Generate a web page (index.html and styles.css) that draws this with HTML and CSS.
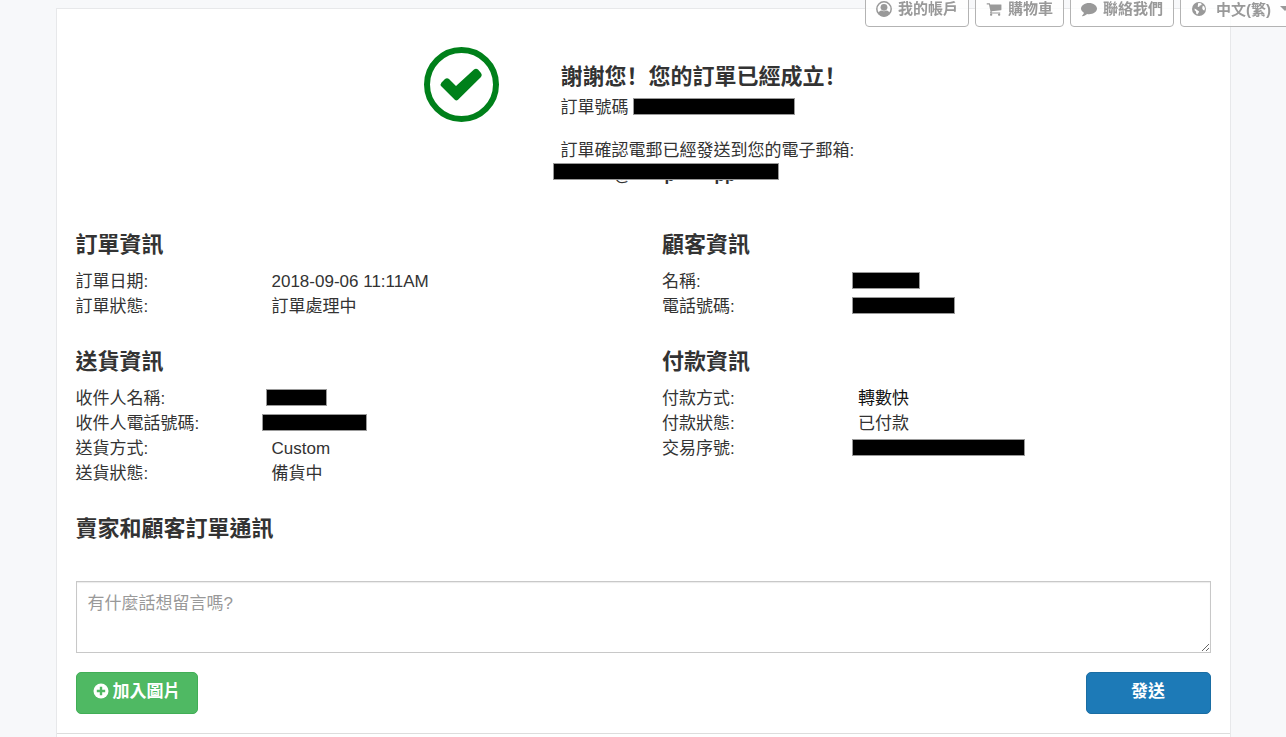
FILE: index.html
```html
<!DOCTYPE html>
<html lang="zh-Hant">
<head>
    <meta charset="UTF-8">
    <meta name="viewport" content="width=device-width, initial-scale=1.0">
    <title>訂單已經成立</title>
    <link rel="stylesheet" href="styles.css">
</head>
<body>
    <nav class="topnav">
        <a class="nav-btn" href="#">
            <svg class="icon" viewBox="0 0 16 16"><circle cx="8" cy="8" r="7.2" fill="none" stroke="currentColor" stroke-width="1.500"/><circle cx="8" cy="6.300" r="3.400" fill="currentColor"/><path fill="currentColor" d="M2 12.400C2.600 10.800 4 9.900 5.400 9.600q2.600 1.500 5.200 0c1.400.300 2.800 1.200 3.400 2.800Q11.500 15.500 8 15.500t-6-3.100z"/></svg>
            我的帳戶
        </a>
        <a class="nav-btn" href="#">
            <svg class="icon" viewBox="0 0 1792 1792"><path fill="currentColor" d="M704 1536q0 52-38 90t-90 38-90-38-38-90 38-90 90-38 90 38 38 90zm896 0q0 52-38 90t-90 38-90-38-38-90 38-90 90-38 90 38 38 90zm128-1088v512q0 24-16.500 42.500t-40.500 21.500l-1044 122q13 60 13 70 0 16-24 64h920q26 0 45 19t19 45-19 45-45 19h-1024q-26 0-45-19t-19-45q0-11 8-31.500t16-36 21.500-40 15.500-29.500l-177-823h-204q-26 0-45-19t-19-45 19-45 45-19h256q16 0 28.500 6.500t19.500 15.500 13 24.500 8 26 5.500 29.500 4.500 26h1201q26 0 45 19t19 45z"/></svg>
            購物車
        </a>
        <a class="nav-btn" href="#">
            <svg class="icon" viewBox="0 0 16 16"><path fill="currentColor" d="M8 2c4.400 0 8 2.500 8 5.600s-3.600 5.600-8 5.600q-1 0-1.900-.200C4.800 14.200 3.200 15 1.400 15.200c-.4 0-.5-.4-.2-.7.800-.7 1.500-1.500 1.700-2.800C1.100 10.700 0 9.200 0 7.600 0 4.500 3.600 2 8 2z"/></svg>
            聯絡我們
        </a>
        <button class="nav-btn nav-lang" type="button">
            <svg class="icon" viewBox="0 0 16 16"><circle cx="8" cy="8" r="7" fill="currentColor"/><path fill="#fff" d="M7 2.200l2.200-.2 1.600 1-.6 1.200-1.400.4-.8 1.400-1.400-.4.4-1.600zM11.800 4.600l1.400.8.8 2.200-.6 1.800-1.400-.4-.8-1.800zM3.600 7.600l1.400.6 1.600 1.200 1.400.8-.4 1.600-1.400 1.600-1-.8-.2-2-1.400-1.400z"/></svg>
            中文(繁)
            <span class="caret"></span>
        </button>
    </nav>

    <main class="card">
        <div class="order">
            <div class="thanks">
                <svg class="thanks-icon" viewBox="0 0 75 75"><circle cx="37.500" cy="37.500" r="34.500" fill="none" stroke="#00801a" stroke-width="6"/><path fill="#00801a" d="M17.500 35.500l3.500-3.500q2-1.600 4 0l7 7L50 22.500q2-1.600 4 0l3 3.500q1.600 2 0 4L34 52.800q-1.600 1.400-3.200 0L17.500 39.500q-1.800-2 0-4z"/></svg>
                <div class="thanks-text">
                    <h1>謝謝您<span class="mark" lang="zh-Hans">！</span>您的訂單已經成立<span class="mark" lang="zh-Hans">！</span></h1>
                    <p>訂單號碼 <span class="redacted order-no"></span></p>
                    <p class="mail-note">訂單確認電郵已經發送到您的電子郵箱:</p>
                    <p class="mail"><span class="mail-at">@</span><span class="mail-mid">p</span><span>pp</span><span class="mail-cover"></span></p>
                </div>
            </div>

            <div class="info">
                <section>
                    <h2>訂單資訊</h2>
                    <dl>
                        <dt>訂單日期:</dt>
                        <dd>2018-09-06 11:11AM</dd>
                        <dt>訂單狀態:</dt>
                        <dd>訂單處理中</dd>
                    </dl>
                </section>
                <section>
                    <h2>顧客資訊</h2>
                    <dl>
                        <dt>名稱:</dt>
                        <dd><span class="redacted customer-name"></span></dd>
                        <dt>電話號碼:</dt>
                        <dd><span class="redacted customer-phone"></span></dd>
                    </dl>
                </section>
                <section>
                    <h2>送貨資訊</h2>
                    <dl>
                        <dt>收件人名稱:</dt>
                        <dd><span class="redacted receiver-name"></span></dd>
                        <dt>收件人電話號碼:</dt>
                        <dd><span class="redacted receiver-phone"></span></dd>
                        <dt>送貨方式:</dt>
                        <dd>Custom</dd>
                        <dt>送貨狀態:</dt>
                        <dd>備貨中</dd>
                    </dl>
                </section>
                <section>
                    <h2>付款資訊</h2>
                    <dl>
                        <dt>付款方式:</dt>
                        <dd class="fps">轉數快</dd>
                        <dt>付款狀態:</dt>
                        <dd>已付款</dd>
                        <dt>交易序號:</dt>
                        <dd><span class="redacted trade-no"></span></dd>
                    </dl>
                </section>
            </div>

            <form class="message">
                <h2><label for="message">賣家和顧客訂單通訊</label></h2>
                <textarea id="message" placeholder="有什麼話想留言嗎?"></textarea>
                <div class="actions">
                    <button class="btn btn-add" type="button">
                        <svg class="icon" viewBox="0 0 16 16"><circle cx="8" cy="8" r="7.500" fill="#fff"/><path fill="#4fb963" d="M6.800 3.800h2.400v3h3v2.400h-3v3H6.800v-3h-3V6.800h3z"/></svg>
                        加入圖片
                    </button>
                    <button class="btn btn-send" type="submit">發送</button>
                </div>
            </form>
        </div>
    </main>
</body>
</html>
```
FILE: styles.css
```css
* {
    box-sizing: border-box;
}
body {
    display: flex;
    flex-direction: column;
    min-height: 100vh;
    margin: 0;
    padding-top: 8px;
    background-color: #f7f8fa;
    color: #333;
    font-family: "Liberation Sans", "Noto Sans CJK TC", sans-serif;
    font-size: 17px;
    line-height: 25px;
}
h1, h2, p, dl, dd {
    margin: 0;
}
h1, h2 {
    font-size: 22px;
    line-height: 26px;
    font-weight: bold;
}

/* top buttons */
.topnav {
    position: fixed;
    top: -10px;
    right: -12px;
    z-index: 10;
    display: flex;
    gap: 6px;
}
.nav-btn {
    display: flex;
    align-items: center;
    gap: 6px;
    height: 37px;
    padding: 0 10px;
    border: 1px solid #b3b3b3;
    border-radius: 4px;
    background-color: rgba(255, 255, 255, 0.8);
    color: #999;
    font-family: inherit;
    font-size: 15px;
    font-weight: bold;
    text-decoration: none;
    white-space: nowrap;
}
.nav-lang {
    gap: 9px;
    width: 118px;
}
.icon {
    width: 16px;
    height: 16px;
    flex: none;
}
.caret {
    border: 5px solid transparent;
    border-top-color: #999;
    border-bottom: 0;
}

/* white page */
.card {
    flex: 1;
    width: calc(100% - 20px);
    max-width: 1175px;
    margin: 0 auto;
    border: 1px solid #e7e8ea;
    border-bottom: 0;
    background-color: #fff;
}
.order {
    padding: 38px 19px 19px;
    border-bottom: 1px solid #ddd;
}
.thanks {
    display: flex;
    justify-content: center;
    gap: 62px;
}
.thanks-icon {
    width: 75px;
    height: 75px;
    flex: none;
}
.thanks-text {
    min-width: 302px;
    padding-top: 16px;
}
.thanks-text h1 {
    margin-bottom: 5px;
}
.thanks-text .mark {
    font-family: "Noto Sans CJK SC", sans-serif;
    line-height: 1;
}
.thanks-text .mail-note {
    margin-top: 18px;
}

/* blacked out values */
.redacted, .mail-cover {
    display: inline-block;
    height: 17px;
    border: 1px solid #999;
    background-color: #000;
}
.redacted {
    margin-top: 3px;
    margin-left: -6px;
    vertical-align: top;
}
.order-no {
    width: 162px;
    margin-left: 0;
}
.customer-name {
    width: 68px;
}
.customer-phone {
    width: 103px;
}
.receiver-name {
    width: 61px;
}
.receiver-phone {
    width: 105px;
    margin-left: -10px;
}
.trade-no {
    width: 173px;
}
.mail {
    position: relative;
    display: flex;
    height: 25px;
    padding-left: 54px;
    font-weight: bold;
}
.mail-at, .mail-mid {
    width: 50px;
}
.mail-cover {
    position: absolute;
    top: 0;
    left: -8px;
    width: 226px;
}

/* order details */
.info {
    display: grid;
    grid-template-columns: 1fr 1fr;
    gap: 30px 38px;
    margin-top: 44px;
}
.info h2 {
    margin-bottom: 11px;
}
.info dl {
    display: grid;
    grid-template-columns: 196px 1fr;
    grid-auto-rows: 25px;
}
.fps {
    color: #111;
}

/* message form */
.message {
    margin-top: 30px;
}
.message textarea {
    display: block;
    width: 100%;
    height: 72px;
    margin-top: 39px;
    padding: 9px 11px;
    border: 1px solid #c8c8c8;
    border-radius: 0;
    box-shadow: inset 0 1px 1px rgba(0, 0, 0, 0.08);
    font: inherit;
    resize: vertical;
}
.message textarea::placeholder {
    color: #999;
}
.actions {
    display: flex;
    justify-content: space-between;
    margin-top: 19px;
}
.btn {
    display: flex;
    align-items: center;
    justify-content: center;
    gap: 4px;
    height: 42px;
    padding: 0 6px 4px;
    border: 1px solid;
    border-radius: 5px;
    color: #fff;
    font-family: inherit;
    font-size: 17px;
    line-height: 25px;
    font-weight: bold;
    cursor: pointer;
}
.btn-add {
    width: 122px;
    border-color: #41ae56;
    background-color: #4fb963;
}
.btn-send {
    width: 125px;
    border-color: #1a6da3;
    background-color: #1d7ab7;
}
```
